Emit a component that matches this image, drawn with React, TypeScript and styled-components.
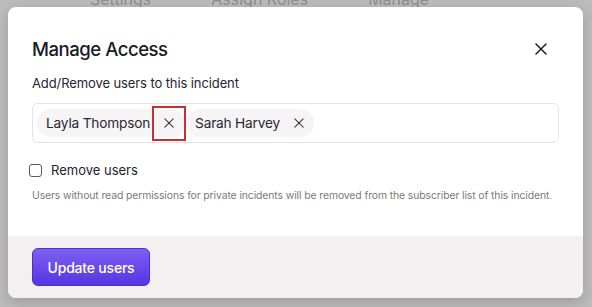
import React from "react";
import styled, { createGlobalStyle } from "styled-components";

const Global = createGlobalStyle`
  html, body { margin: 0; padding: 0; }
  body {
    width: 592px; height: 307px; overflow: hidden;
    background: #bdbcbc;
    font-family: Inter, "Noto Sans", "Liberation Sans", sans-serif;
    -webkit-font-smoothing: antialiased;
  }
`;

const Page = styled.div`
  position: relative;
  width: 592px;
  height: 307px;
  padding: 7px 9px 0 8px;
  box-sizing: border-box;
`;

const Backdrop = styled.div`
  position: absolute;
  top: -11px;
  left: 0;
  right: 0;
  display: flex;
  gap: 60px;
  padding-left: 90px;
  font-size: 16px;
  color: #8d8d8d;
  white-space: nowrap;
`;

const Modal = styled.div`
  position: relative;
  background: #fff;
  border-radius: 8px;
  overflow: hidden;
  box-shadow: 0 4px 14px rgba(0, 0, 0, 0.18);
  display: flex;
  flex-direction: column;
  height: 291px;
`;

const Body = styled.div`
  flex: 1;
  padding: 28px 24px 0 24px;
  display: flex;
  flex-direction: column;
`;

const Header = styled.div`
  display: flex;
  align-items: center;
  justify-content: space-between;
  height: 28px;
`;

const Title = styled.h2`
  margin: 0;
  font-size: 18.6px;
  font-weight: 500;
  color: #1b1a27;
  letter-spacing: -0.5px;
`;

const CloseButton = styled.button`
  border: none;
  background: none;
  padding: 0;
  margin-right: 10px;
  width: 16px;
  height: 16px;
  display: flex;
  align-items: center;
  justify-content: center;
  color: #1d1c2a;
`;

const Label = styled.div`
  margin-top: 12px;
  font-size: 13px;
  color: #26252f;
  letter-spacing: -0.1px;
`;

const Field = styled.div`
  margin-top: 12px;
  height: 40px;
  box-sizing: border-box;
  border: 1px solid #e4e2e2;
  border-radius: 6px;
  display: flex;
  align-items: center;
  padding: 0 4px;
  gap: 0;
`;

const Chip = styled.div`
  display: flex;
  align-items: center;
  height: 28px;
  border-radius: 14px;
  background: #f6f4f4;
  padding-left: 9px;
  font-size: 13.7px;
  color: #2a2933;
  letter-spacing: -0.2px;
`;

const ChipRemove = styled.span<{ $highlight?: boolean }>`
  display: flex;
  align-items: center;
  justify-content: center;
  width: ${(p) => (p.$highlight ? "34px" : "29px")};
  height: ${(p) => (p.$highlight ? "35px" : "28px")};
  margin-left: ${(p) => (p.$highlight ? "2px" : "5px")};
  box-sizing: border-box;
  border: ${(p) => (p.$highlight ? "2px solid #c6302f" : "none")};
  color: #3a3940;
`;

const CheckRow = styled.label`
  margin-top: 19px;
  display: flex;
  align-items: center;
  gap: 9px;
  font-size: 13px;
  color: #23222c;
`;

const Box = styled.span`
  width: 13px;
  height: 13px;
  border: 1px solid #5a5960;
  border-radius: 3px;
  margin-left: -3px;
  box-sizing: border-box;
`;

const Help = styled.p`
  margin: 11px 0 0;
  font-size: 10.4px;
  color: #7a7979;
  letter-spacing: -0.1px;
  white-space: nowrap;
`;

const Footer = styled.div`
  height: 62px;
  background: #f2f0f0;
  display: flex;
  align-items: center;
  padding: 0 24px;
`;

const PrimaryButton = styled.button`
  height: 38px;
  width: 118px;
  border: 1px solid #4a2fd1;
  border-radius: 6px;
  background: linear-gradient(180deg, #7d5ff2 0%, #5536e2 100%);
  color: #fff;
  font-family: inherit;
  font-size: 14px;
  font-weight: 500;
  letter-spacing: -0.2px;
`;

const XIcon = ({ size, stroke }: { size: number; stroke: number }) => (
  <svg width={size} height={size} viewBox="0 0 12 12" fill="none">
    <path d="M1 1L11 11M11 1L1 11" stroke="currentColor" strokeWidth={stroke} strokeLinecap="round" />
  </svg>
);

export default function App() {
  return (
    <>
      <Global />
      <Page>
        <Backdrop>
          <span>Settings</span>
          <span>Assign Roles</span>
          <span>Manage</span>
        </Backdrop>
        <Modal>
          <Body>
            <Header>
              <Title>Manage Access</Title>
              <CloseButton aria-label="Close">
                <XIcon size={12} stroke={1.5} />
              </CloseButton>
            </Header>
            <Label>Add/Remove users to this incident</Label>
            <Field>
              <Chip>
                Layla Thompson
                <ChipRemove $highlight>
                  <XIcon size={10} stroke={1.3} />
                </ChipRemove>
              </Chip>
              <Chip>
                Sarah Harvey
                <ChipRemove>
                  <XIcon size={10} stroke={1.3} />
                </ChipRemove>
              </Chip>
            </Field>
            <CheckRow>
              <Box />
              Remove users
            </CheckRow>
            <Help>
              Users without read permissions for private incidents will be removed from the subscriber list of this incident.
            </Help>
          </Body>
          <Footer>
            <PrimaryButton>Update users</PrimaryButton>
          </Footer>
        </Modal>
      </Page>
    </>
  );
}
